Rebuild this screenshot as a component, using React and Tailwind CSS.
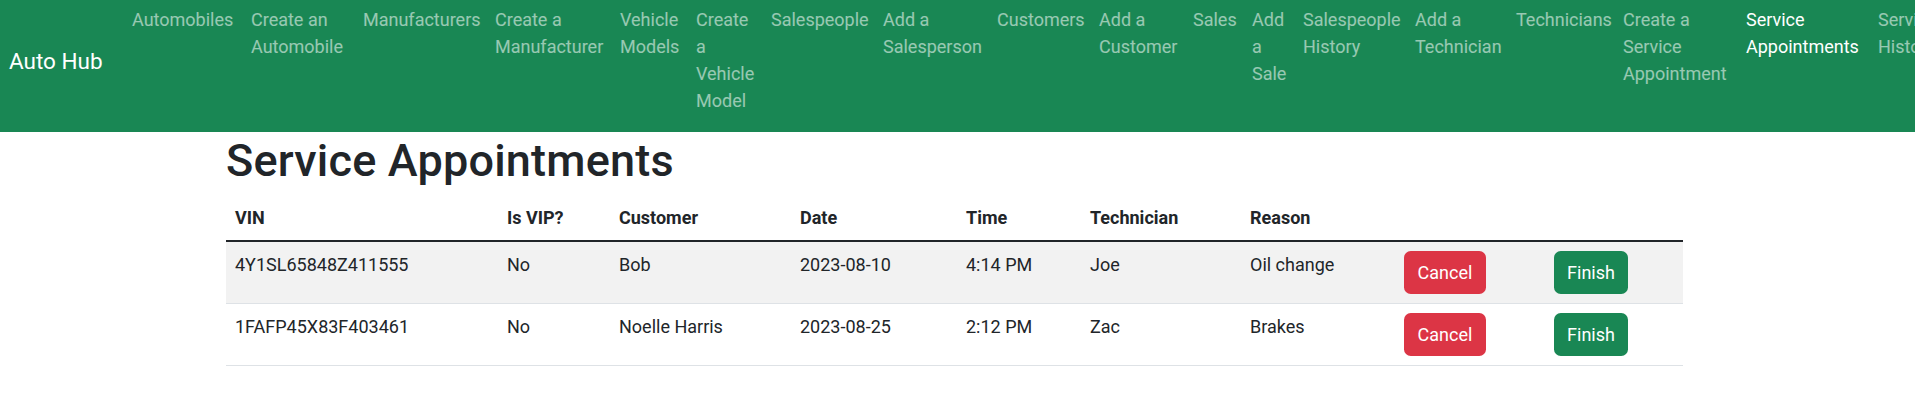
import React from 'react';

const navItems = [
  { lines: ['Automobiles'], w: 'w-[119px]' },
  { lines: ['Create an', 'Automobile'], w: 'w-[112px]' },
  { lines: ['Manufacturers'], w: 'w-[132px]' },
  { lines: ['Create a', 'Manufacturer'], w: 'w-[125px]' },
  { lines: ['Vehicle', 'Models'], w: 'w-[76px]' },
  { lines: ['Create', 'a', 'Vehicle', 'Model'], w: 'w-[75px]' },
  { lines: ['Salespeople'], w: 'w-[112px]' },
  { lines: ['Add a', 'Salesperson'], w: 'w-[114px]' },
  { lines: ['Customers'], w: 'w-[102px]' },
  { lines: ['Add a', 'Customer'], w: 'w-[94px]' },
  { lines: ['Sales'], w: 'w-[59px]' },
  { lines: ['Add', 'a', 'Sale'], w: 'w-[51px]' },
  { lines: ['Salespeople', 'History'], w: 'w-[112px]' },
  { lines: ['Add a', 'Technician'], w: 'w-[101px]' },
  { lines: ['Technicians'], w: 'w-[107px]' },
  { lines: ['Create a', 'Service', 'Appointment'], w: 'w-[123px]' },
  { lines: ['Service', 'Appointments'], w: 'w-[132px]', active: true },
  { lines: ['Service', 'History'], w: 'w-[110px]' },
];

const columns = [
  { label: 'VIN', w: 'w-[272px]' },
  { label: 'Is VIP?', w: 'w-[112px]' },
  { label: 'Customer', w: 'w-[181px]' },
  { label: 'Date', w: 'w-[166px]' },
  { label: 'Time', w: 'w-[124px]' },
  { label: 'Technician', w: 'w-[160px]' },
  { label: 'Reason', w: 'w-[154px]' },
  { label: '', w: 'w-[150px]' },
  { label: '', w: 'w-[138px]' },
];

const appointments = [
  { vin: '4Y1SL65848Z411555', vip: 'No', customer: 'Bob', date: '2023-08-10', time: '4:14 PM', tech: 'Joe', reason: 'Oil change' },
  { vin: '1FAFP45X83F403461', vip: 'No', customer: 'Noelle Harris', date: '2023-08-25', time: '2:12 PM', tech: 'Zac', reason: 'Brakes' },
];

function Navbar() {
  return (
    <nav className="w-full h-[132px] bg-[#198754] flex items-start overflow-hidden">
      <a href="#" className="shrink-0 w-[123px] pl-[9px] mt-[44px] text-[22.5px] leading-[34px] text-white">
        Auto Hub
      </a>
      <div className="flex items-start pt-[6px]">
        {navItems.map((item, i) => (
          <a
            key={i}
            href="#"
            className={`shrink-0 px-[9px] ${item.w} text-[18px] leading-[27px] whitespace-nowrap ${item.active ? 'text-white' : 'text-white/55'}`}
          >
            {item.lines.map((line, j) => (
              <span key={j} className="block">{line}</span>
            ))}
          </a>
        ))}
      </div>
    </nav>
  );
}

function AppointmentsTable() {
  return (
    <table className="w-full table-fixed border-collapse text-[18px] leading-[27px] text-[#212529]">
      <thead>
        <tr>
          {columns.map((col, i) => (
            <th key={i} className={`${col.w} p-[9px] text-left font-bold border-b-2 border-[#212529]`}>
              {col.label}
            </th>
          ))}
        </tr>
      </thead>
      <tbody>
        {appointments.map((a, i) => (
          <tr key={a.vin} className={i % 2 === 0 ? 'bg-[#f2f2f2]' : 'bg-white'}>
            <td className="p-[9px] align-top border-b border-[#dee2e6]">{a.vin}</td>
            <td className="p-[9px] align-top border-b border-[#dee2e6]">{a.vip}</td>
            <td className="p-[9px] align-top border-b border-[#dee2e6]">{a.customer}</td>
            <td className="p-[9px] align-top border-b border-[#dee2e6]">{a.date}</td>
            <td className="p-[9px] align-top border-b border-[#dee2e6]">{a.time}</td>
            <td className="p-[9px] align-top border-b border-[#dee2e6]">{a.tech}</td>
            <td className="p-[9px] align-top border-b border-[#dee2e6]">{a.reason}</td>
            <td className="p-[9px] align-top border-b border-[#dee2e6]">
              <button className="w-[82px] h-[43px] rounded-[6.75px] bg-[#dc3545] text-white text-[18px] leading-[27px]">
                Cancel
              </button>
            </td>
            <td className="p-[9px] align-top border-b border-[#dee2e6]">
              <button className="w-[74px] h-[43px] rounded-[6.75px] bg-[#198754] text-white text-[18px] leading-[27px]">
                Finish
              </button>
            </td>
          </tr>
        ))}
      </tbody>
    </table>
  );
}

export default function App() {
  return (
    <div className="min-h-[417px] bg-white font-['Roboto','Liberation_Sans',sans-serif] overflow-hidden">
      <Navbar />
      <main className="ml-[226px] w-[1457px]">
        <h1 className="mt-[2px] mb-[7px] text-[45px] leading-[54px] font-medium tracking-[0.2px] text-[#212529]">
          Service Appointments
        </h1>
        <AppointmentsTable />
      </main>
    </div>
  );
}
